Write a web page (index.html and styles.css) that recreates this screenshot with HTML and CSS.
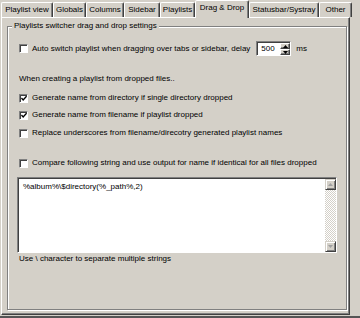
FILE: index.html
```html
<!DOCTYPE html>
<html>
<head>
<meta charset="utf-8">
<link rel="stylesheet" href="styles.css">
</head>
<body>
<div class="window">
  <div class="tabs">
    <div class="tab tab-view">Playlist view</div>
    <div class="tab tab-globals">Globals</div>
    <div class="tab tab-columns">Columns</div>
    <div class="tab tab-sidebar">Sidebar</div>
    <div class="tab tab-playlists">Playlists</div>
    <div class="tab tab-dnd active">Drag &amp; Drop</div>
    <div class="tab tab-status">Statusbar/Systray</div>
    <div class="tab tab-other">Other</div>
  </div>
  <div class="panel">
    <div class="group">
      <span class="legend">Playlists switcher drag and drop settings</span>
      <div class="row row-auto">
        <span class="check"></span>
        <span class="label">Auto switch playlist when dragging over tabs or sidebar, delay</span>
        <span class="spin">
          <span class="spin-val">500</span>
          <span class="spin-btns">
            <span class="sbtn"><svg width="5" height="3" viewBox="0 0 5 3"><polygon points="2.5,0 5,3 0,3" fill="#000"/></svg></span>
            <span class="sbtn"><svg width="5" height="3" viewBox="0 0 5 3"><polygon points="0,0 5,0 2.5,3" fill="#000"/></svg></span>
          </span>
        </span>
        <span class="unit">ms</span>
      </div>
      <div class="text when">When creating a playlist from dropped files..</div>
      <div class="row row-c1">
        <span class="check"><svg width="7" height="7" viewBox="0 0 7 7"><polyline points="0.5,3 2.5,5.2 6.5,0.8" fill="none" stroke="#000" stroke-width="1.6"/></svg></span>
        <span class="label">Generate name from directory if single directory dropped</span>
      </div>
      <div class="row row-c2">
        <span class="check"><svg width="7" height="7" viewBox="0 0 7 7"><polyline points="0.5,3 2.5,5.2 6.5,0.8" fill="none" stroke="#000" stroke-width="1.6"/></svg></span>
        <span class="label">Generate name from filename if playlist dropped</span>
      </div>
      <div class="row row-c3">
        <span class="check"></span>
        <span class="label">Replace underscores from filename/direcotry generated playlist names</span>
      </div>
      <div class="row row-c4">
        <span class="check"></span>
        <span class="label">Compare following string and use output for name if identical for all files dropped</span>
      </div>
      <div class="memo">
        <div class="memo-text">%album%\$directory(%_path%,2)</div>
        <div class="vscroll">
          <span class="arrow-btn"><svg width="5" height="3" viewBox="0 0 5 3"><polygon points="2.5,0 5,3 0,3" fill="#a0a0a0"/></svg></span>
          <span class="track"></span>
          <span class="arrow-btn"><svg width="5" height="3" viewBox="0 0 5 3"><polygon points="0,0 5,0 2.5,3" fill="#a0a0a0"/></svg></span>
        </div>
      </div>
      <div class="text hint">Use \ character to separate multiple strings</div>
    </div>
  </div>
</div>
</body>
</html>
```

FILE: styles.css
```css
* { box-sizing: border-box; }
html, body { margin: 0; padding: 0; }
body {
  background: #555;
  font-family: "Liberation Sans", Arial, sans-serif;
  font-size: 8px;
  color: #000;
}
.window {
  width: 360px;
  height: 316px;
  background: #d4d0c8;
  overflow: hidden;
}
.tabs {
  display: flex;
  height: 17px;
  align-items: flex-end;
  padding-left: 1px;
}
.tab {
  flex: none;
  height: 15px;
  padding: 0;
  text-align: center;
  line-height: 13px;
  border: 1px solid;
  border-bottom: none;
  border-color: #fff #404040 transparent #fff;
  box-shadow: inset -1px 0 0 #808080;
  border-radius: 2px 2px 0 0;
  white-space: nowrap;
}
.tab-view { width: 52px; }
.tab-globals { width: 33px; }
.tab-columns { width: 38px; }
.tab-sidebar { width: 36px; }
.tab-playlists { width: 35px; }
.tab-dnd { width: 54px; }
.tab-status { width: 70px; }
.tab-other { width: 33px; }
.tab.active {
  height: 18px;
  margin-bottom: -1px;
  line-height: 13px;
  position: relative;
  z-index: 1;
  background: #d4d0c8;
}
.panel {
  margin-left: 1px;
  width: 349px;
  height: 298px;
  border: 1px solid;
  border-color: #fff #404040 #404040 #fff;
  box-shadow: inset -1px -1px 0 #808080;
  padding: 8px 0 0 5px;
}
.group {
  position: relative;
  width: 340px;
  height: 284px;
  border: 1px solid #808080;
  box-shadow: inset 1px 1px 0 #fff, 1px 1px 0 #fff;
  padding: 0 8px 0 11px;
  display: flex;
  flex-direction: column;
}
.legend {
  position: absolute;
  left: 4px;
  top: -6px;
  padding: 0 2px;
  line-height: 10px;
  background: #d4d0c8;
  white-space: nowrap;
}
.row {
  display: flex;
  align-items: center;
  white-space: nowrap;
}
.check {
  width: 9px;
  height: 9px;
  flex: none;
  background: #fff;
  border: 1px solid;
  border-color: #808080 #fff #fff #808080;
  box-shadow: inset 1px 1px 0 #404040;
  display: flex;
  align-items: center;
  justify-content: center;
  padding: 1px 0 0 1px;
}
.label { margin-left: 4px; line-height: 10px; }
.row-auto { margin-top: 14px; height: 15px; }
.spin {
  margin-left: 6px;
  width: 35px;
  height: 15px;
  background: #fff;
  border: 1px solid;
  border-color: #808080 #fff #fff #808080;
  box-shadow: inset 1px 1px 0 #404040;
  display: flex;
  padding: 1px 0 0 1px;
}
.spin-val { flex: 1; padding-left: 3px; line-height: 12px; }
.spin-btns {
  width: 10px;
  display: flex;
  flex-direction: column;
}
.sbtn {
  flex: 1;
  background: #d4d0c8;
  border: 1px solid;
  border-color: #fff #404040 #404040 #fff;
  box-shadow: inset -1px -1px 0 #808080;
  display: flex;
  align-items: center;
  justify-content: center;
}
.unit { margin-left: 5px; }
.text { line-height: 10px; white-space: nowrap; }
.when { margin-top: 18px; }
.row-c1 { margin-top: 9px; height: 10px; }
.row-c2 { margin-top: 7px; height: 10px; }
.row-c3 { margin-top: 8px; height: 10px; }
.row-c4 { margin-top: 20px; height: 10px; }
.memo {
  margin-top: 9px;
  margin-left: -2px;
  width: 320px;
  height: 76px;
  background: #fff;
  border: 1px solid;
  border-color: #808080 #fff #fff #808080;
  box-shadow: inset 1px 1px 0 #404040;
  display: flex;
  padding: 1px 0 0 1px;
}
.memo-text { flex: 1; padding: 3px 4px; line-height: 10px; }
.vscroll {
  width: 11px;
  display: flex;
  flex-direction: column;
}
.arrow-btn {
  height: 11px;
  background: #d4d0c8;
  border: 1px solid;
  border-color: #d4d0c8 #404040 #404040 #d4d0c8;
  box-shadow: inset 1px 1px 0 #fff, inset -1px -1px 0 #808080;
  display: flex;
  align-items: center;
  justify-content: center;
}
.track {
  flex: 1;
  background-color: #fff;
  background-image: repeating-conic-gradient(#d4d0c8 0 25%, #fff 0 50%);
  background-size: 2px 2px;
}
.hint { margin-top: 1px; }
```
